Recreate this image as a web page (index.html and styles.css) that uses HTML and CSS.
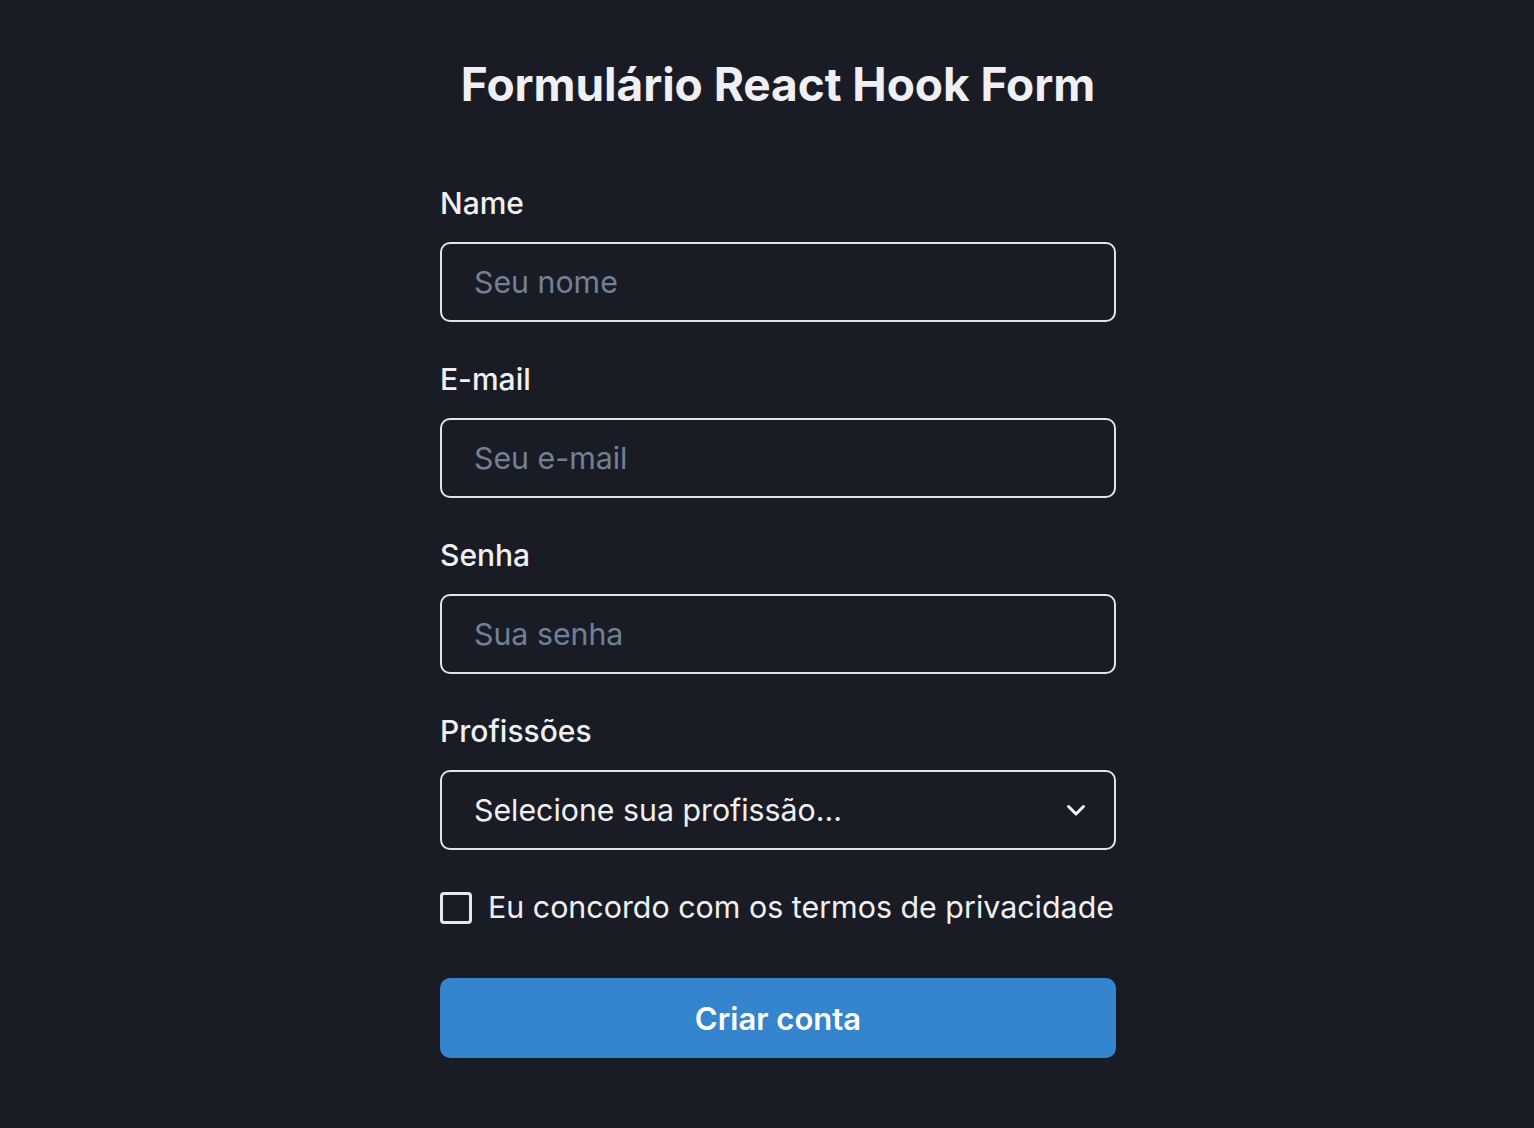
FILE: index.html
```html
<!DOCTYPE html>
<html lang="pt-BR">
<head>
<meta charset="utf-8">
<title>Formulário React Hook Form</title>
<link rel="stylesheet" href="styles.css">
</head>
<body>
<main class="page">
  <h1 class="title">Formulário React Hook Form</h1>
  <form class="form">
    <div class="field">
      <label class="label" for="name">Name</label>
      <input class="input" id="name" type="text" placeholder="Seu nome">
    </div>
    <div class="field">
      <label class="label" for="email">E-mail</label>
      <input class="input" id="email" type="email" placeholder="Seu e-mail">
    </div>
    <div class="field">
      <label class="label" for="senha">Senha</label>
      <input class="input" id="senha" type="password" placeholder="Sua senha">
    </div>
    <div class="field">
      <label class="label" for="prof">Profissões</label>
      <div class="select-wrap">
        <select class="input select" id="prof">
          <option>Selecione sua profissão...</option>
        </select>
        <svg class="chevron" width="24" height="24" viewBox="0 0 24 24" aria-hidden="true">
          <path d="M4.5 8.5 L12 16 L19.5 8.5" fill="none" stroke="#f2f2f4" stroke-width="3" stroke-linecap="round" stroke-linejoin="round"/>
        </svg>
      </div>
    </div>
    <label class="check">
      <span class="box"></span>
      <span class="check-text">Eu concordo com os termos de privacidade</span>
    </label>
    <button class="button" type="button">Criar conta</button>
  </form>
</main>
</body>
</html>
```
FILE: styles.css
```css
html, body {
  margin: 0;
  padding: 0;
  background: #1a1c25;
}
body {
  font-family: Inter, "Noto Sans", "Liberation Sans", sans-serif;
  color: rgba(255, 255, 255, 0.92);
}
.page {
  display: flex;
  flex-direction: column;
  align-items: center;
  padding: 57px 0 0 22px;
  min-height: 1071px;
}
.title {
  margin: 0;
  font-size: 46px;
  line-height: 55px;
  font-weight: 700;
  color: #f0eff4;
  letter-spacing: -0.05px;
}
.form {
  width: 676px;
  display: flex;
  flex-direction: column;
  margin-top: 69px;
}
.field {
  display: flex;
  flex-direction: column;
  margin-bottom: 35px;
}
.label {
  font-size: 30px;
  line-height: 45px;
  font-weight: 500;
  margin-bottom: 16px;
  color: #f0f0f3;
}
.input {
  box-sizing: border-box;
  width: 100%;
  height: 80px;
  border: 2px solid #dfe3ea;
  border-radius: 10px;
  background: transparent;
  padding: 0 32px;
  font-family: inherit;
  font-size: 30.3px;
  color: #f0f0f3;
  outline: none;
}
.input::placeholder {
  color: #718096;
  opacity: 1;
}
.select-wrap {
  position: relative;
}
.select {
  appearance: none;
  -webkit-appearance: none;
  padding-right: 80px;
}
.select option {
  background: #1a1c25;
}
.chevron {
  position: absolute;
  right: 28px;
  top: 28px;
  pointer-events: none;
}
.check {
  display: flex;
  align-items: center;
  gap: 16px;
  height: 45px;
}
.box {
  box-sizing: border-box;
  width: 32px;
  height: 32px;
  border: 3px solid #e2e8f0;
  border-radius: 4px;
  flex: none;
}
.check-text {
  font-size: 30.4px;
  line-height: 45px;
  color: #f0f0f3;
  white-space: nowrap;
}
.button {
  margin-top: 48px;
  height: 80px;
  border: none;
  border-radius: 10px;
  background: #3584ce;
  color: #ffffff;
  font-family: inherit;
  font-size: 31px;
  font-weight: 600;
}
```
